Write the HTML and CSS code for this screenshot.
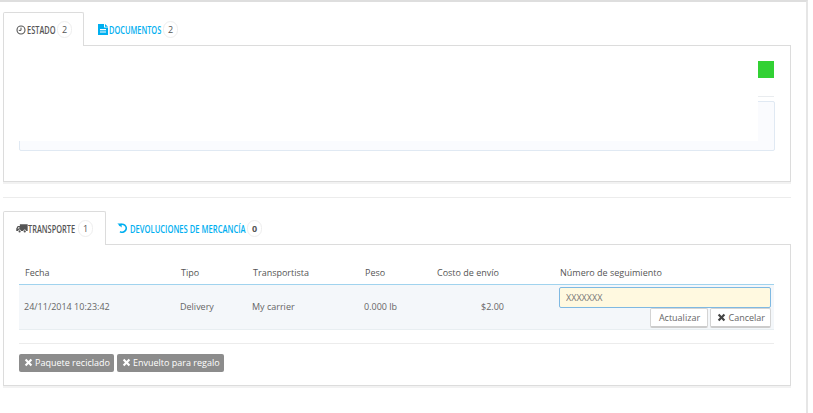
FILE: index.html
```html
<!DOCTYPE html>
<html lang="es">
<head>
<meta charset="utf-8">
<title>Pedido</title>
<link rel="stylesheet" href="styles.css">
</head>
<body>
<svg class="defs" width="0" height="0" aria-hidden="true">
  <symbol id="x" viewBox="0 0 10 10"><path d="M2.6 0.9 5 3.3 7.4 0.9 9.1 2.6 6.7 5 9.1 7.4 7.4 9.1 5 6.7 2.6 9.1 0.9 7.4 3.3 5 0.9 2.6Z"/></symbol>
</svg>
<main class="page">
  <section class="block block-first">
    <nav class="tabs">
      <a class="tab active tab-estado"><svg class="ico" width="10" height="10" viewBox="0 0 10 10"><circle cx="5" cy="5" r="4" fill="none" stroke="#555" stroke-width="1.1"/><path d="M5 2.6V5.4H2.8" fill="none" stroke="#555" stroke-width="1"/></svg><span class="tab-text t-estado"><span>ESTADO</span></span><b class="badge">2</b></a>
      <a class="tab tab-docs"><svg class="ico" width="10" height="11" viewBox="0 0 10 11"><path d="M0 0H6V3.6H10V11H0ZM7 0 10 2.8H7ZM2 5V6.2H8V5ZM2 7.4V8.6H8V7.4Z" fill="#00aff0" fill-rule="evenodd"/></svg><span class="tab-text t-docs"><span>DOCUMENTOS</span></span><b class="badge">2</b></a>
    </nav>
    <div class="panel panel-status">
      <div class="status-side">
        <div class="swatch"></div>
        <div class="thin-rule"></div>
      </div>
      <div class="history"><div class="history-inner"></div></div>
    </div>
  </section>
  <hr class="divider divider-top">
  <section class="block">
    <nav class="tabs">
      <a class="tab active tab-trans"><svg class="ico ico-truck" width="12" height="9" viewBox="0 0 14 10"><path d="M4.5 0H13.6V8H12A1.8 1.8 0 0 0 8.4 8H6A1.8 1.8 0 0 0 2.4 8H0.3V5L2 2.2H4.5ZM3.2 3.2 1.7 5H3.9V3.2Z" fill="#555" fill-rule="evenodd"/><circle cx="4.2" cy="8.4" r="1.3" fill="#555"/><circle cx="10.2" cy="8.4" r="1.3" fill="#555"/></svg><span class="tab-text t-trans"><span>TRANSPORTE</span></span><b class="badge">1</b></a>
      <a class="tab tab-dev"><svg class="ico ico-undo" width="11" height="10" viewBox="0 0 11 10"><path d="M2.2 2.6A4 4 0 1 1 3 8.6" fill="none" stroke="#00aff0" stroke-width="1.7"/><path d="M0.4 0.4H4.6V4.4Z" fill="#00aff0"/></svg><span class="tab-text t-dev"><span>DEVOLUCIONES DE MERCANCÍA</span></span><b class="badge bold">0</b></a>
    </nav>
    <div class="panel panel-shipping">
      <table class="shipping">
        <colgroup><col class="c1"><col class="c2"><col class="c3"><col class="c4"><col class="c5"><col class="c6"></colgroup>
        <thead>
          <tr><th>Fecha</th><th>Tipo</th><th>Transportista</th><th>Peso</th><th>Costo de envío</th><th class="th-track">Número de seguimiento</th></tr>
        </thead>
        <tbody>
          <tr>
            <td>24/11/2014 10:23:42</td>
            <td>Delivery</td>
            <td>My carrier</td>
            <td>0.000 lb</td>
            <td class="cost">$2.00</td>
            <td class="track">
              <input class="track-input" type="text" value="XXXXXXX">
              <div class="track-actions">
                <button class="btn btn-update" type="button">Actualizar</button>
                <button class="btn btn-cancel" type="button"><svg class="x-ico dark"><use href="#x"/></svg>Cancelar</button>
              </div>
            </td>
          </tr>
        </tbody>
      </table>
      <hr class="divider divider-inner">
      <div class="labels">
        <span class="label"><svg class="x-ico light"><use href="#x"/></svg>Paquete reciclado</span>
        <span class="label"><svg class="x-ico light"><use href="#x"/></svg>Envuelto para regalo</span>
      </div>
    </div>
  </section>
</main>
</body>
</html>
```
FILE: styles.css
```css
* { box-sizing: border-box; }
html, body { margin: 0; padding: 0; height: 100%; background: #fff; }
body { font-family: "Open Sans", "Liberation Sans", sans-serif; font-size: 9px; color: #666; overflow: hidden; }
.defs { position: absolute; }
.page {
  width: 808px; height: 413px;
  border-top: 2px solid #dedede;
  border-right: 2px solid #e6e6e6;
  padding: 10px 15px 0 3px;
}
.tabs { display: flex; height: 34px; position: relative; z-index: 1; }
.tab {
  display: flex; align-items: center;
  height: 34px; padding: 0 13px;
  font-family: "Open Sans", sans-serif;
  font-size: 10px; font-weight: 600; color: #00aff0;
  white-space: nowrap;
}
.tab.active {
  color: #555; background: #fff;
  border: 1px solid #dcdcdc; border-bottom: 0;
  border-radius: 2px 2px 0 0;
  height: 34px; padding: 0 11px 0 12px;
}
.tab.tab-trans { padding-right: 12px; }
.tab-docs { padding-left: 14px; }
.tab-dev { padding-left: 11px; }
.tab-text { display: inline-block; height: 15px; padding-top: 1px; line-height: 14px; }
.tab-text > span { display: inline-block; transform: scaleX(.74); transform-origin: 0 50%; }
.t-estado { width: 28px; }
.t-docs { width: 52px; }
.t-trans { width: 48px; }
.t-dev { width: 115px; }
.t-dev > span { transform: scaleX(.76); }
.ico { flex: none; margin-right: 1px; }
.ico-truck { margin-right: 0; }
.ico-undo { margin-right: 2px; }
.badge {
  display: inline-flex; align-items: center; justify-content: center;
  width: 15px; height: 17px; margin-left: 2px;
  border: 1px solid #eee; border-radius: 8px;
  font-family: "Open Sans", sans-serif; font-weight: 400; font-size: 9px; color: #555;
}
.badge.bold { font-weight: 700; }
.panel {
  margin-top: -1px; background: #fff;
  border: 1px solid #dcdcdc;
  box-shadow: 0 2px 0 rgba(0,0,0,.05);
}
.block-first .tabs + .panel { height: 137px; }
.panel-status { padding: 15px 16px 0 15px; }
.status-side { display: flex; flex-direction: column; align-items: flex-end; }
.swatch { width: 16px; height: 17px; background: #32d134; }
.thin-rule { width: 16px; height: 1px; background: #e9ecef; margin-top: 18px; }
.history {
  margin-top: 4px; height: 50px;
  border: 1px solid #e0e9f3; border-radius: 2px; background: #fafbfe;
  padding: 0 16px 9px 0; margin-right: -1px;
}
.history-inner { height: calc(100% + 1px); margin: -1px 0 0 -1px; background: #fff; }
.divider { margin: 0; border: 0; height: 1px; background: #ececec; }
.divider-top { margin: 15px 0 13px; }
.panel-shipping { height: 142px; padding: 15px 16px 0 15px; }
.shipping { width: 755px; table-layout: fixed; border-collapse: collapse; font-size: 9px; }
.c1 { width: 156px; } .c2 { width: 72px; } .c3 { width: 112px; } .c4 { width: 72px; } .c5 { width: 128px; } .c6 { width: 215px; }
.shipping th {
  height: 24px; padding: 1px 0 0 6px; text-align: left; font-weight: 400; color: #555;
  border-bottom: 1px solid #a0d3ee;
}
.shipping td {
  height: 44px; padding: 0 0 0 5px; background: #f4f7fa; color: #666;
  border-bottom: 1px solid #e8eef1;
}
.shipping td.cost { padding: 0 55px 0 0; text-align: right; }
.shipping th.th-track { padding-left: 1px; }
.shipping td.track { padding: 0 3px 1px 0; vertical-align: top; }
.track-input {
  display: block; width: 100%; height: 21px; margin-top: 2px; padding: 0 6px;
  border: 1px solid #7fb9e2; border-radius: 2px; background: #fff9e0;
  font: 9px "Open Sans", sans-serif; color: #777; outline: 0;
}
.track-actions { display: flex; justify-content: flex-end; gap: 2px; }
.btn {
  height: 20px; padding: 0 6px; display: inline-flex; align-items: center;
  background: #fff; border: 1px solid #d4d4d4; border-bottom: 2px solid #ccc; border-radius: 2px;
  font: 9px "Open Sans", sans-serif; color: #666;
}
.btn-update { width: 58px; justify-content: center; padding: 0; }
.btn-cancel { padding-right: 5px; }
.x-ico { width: 9px; height: 9px; flex: none; margin-right: 2px; }
.x-ico.dark { fill: #444; }
.x-ico.light { fill: #fff; }
.divider-inner { margin-top: 13px; width: 755px; }
.labels { display: flex; gap: 3px; margin-top: 10px; }
.label {
  display: inline-flex; align-items: center; height: 18px; padding: 0 4px 0 5px;
  background: #8c8c8c; border-radius: 2px; color: #fff; font-size: 9px;
}
```
